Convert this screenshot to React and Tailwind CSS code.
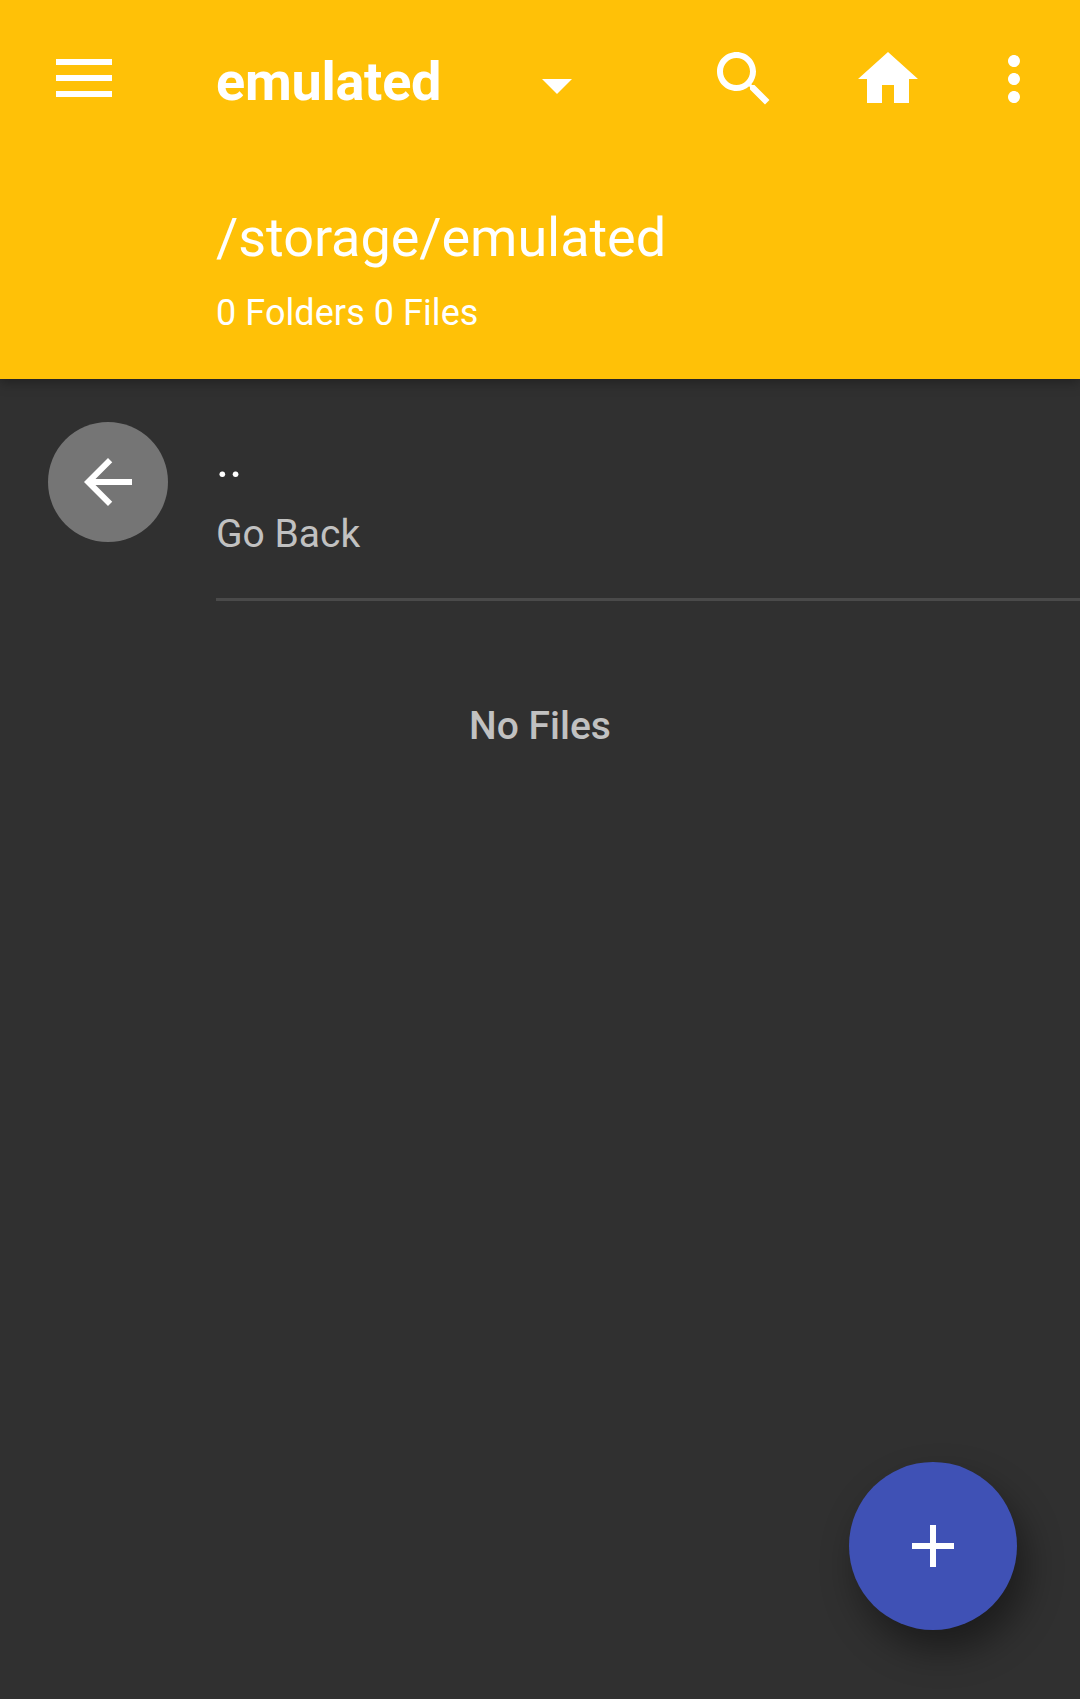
const Icon = ({ d, className }) => (
  <svg viewBox="0 0 24 24" fill="currentColor" className={className}>
    <path d={d} />
  </svg>
);

export default function App() {
  return (
    <div className="relative flex h-[1699px] w-[1080px] flex-col overflow-hidden bg-[#303030] font-['Roboto',sans-serif] text-white">
      <header className="z-10 h-[379px] shrink-0 bg-[#ffc107] shadow-[0_3px_12px_rgba(0,0,0,0.35)]">
        <div className="flex h-[158px] items-center">
          <svg viewBox="0 0 56 38" fill="currentColor" className="mb-[2px] ml-[56px] h-[38px] w-[56px] shrink-0">
            <path d="M0 0h56v6H0zM0 16h56v6H0zM0 32h56v6H0z" />
          </svg>
          <h1 className="ml-[104px] mt-[6px] w-[305px] text-[54px] font-bold leading-none tracking-[-0.25px]">emulated</h1>
          <Icon className="mt-[12px] size-[72px] shrink-0" d="M7 10l5 5 5-5z" />
          <Icon className="ml-[115px] size-[72px] shrink-0" d="M15.5 14h-.79l-.28-.27C15.41 12.59 16 11.11 16 9.5 16 5.91 13.09 3 9.5 3S3 5.91 3 9.5 5.91 16 9.5 16c1.61 0 3.09-.59 4.23-1.57l.27.28v.79l5 4.99L20.49 19l-4.99-5zm-6 0C7.01 14 5 11.99 5 9.5S7.01 5 9.5 5 14 7.01 14 9.5 11.99 14 9.5 14z" />
          <Icon className="ml-[72px] size-[72px] shrink-0" d="M10 20v-6h4v6h5v-8h3L12 3 2 12h3v8z" />
          <Icon className="ml-[54px] size-[72px] shrink-0" d="M12 8c1.1 0 2-.9 2-2s-.9-2-2-2-2 .9-2 2 .9 2 2 2zm0 2c-1.1 0-2 .9-2 2s.9 2 2 2 2-.9 2-2-.9-2-2-2zm0 6c-1.1 0-2 .9-2 2s.9 2 2 2 2-.9 2-2-.9-2-2-2z" />
        </div>
        <div className="pl-[216px] pt-[48px]">
          <p className="text-[54px] leading-[63px] tracking-[-0.05px]">/storage/emulated</p>
          <p className="mt-[23px] text-[36px] leading-[42px] tracking-[0.07px]">0 Folders 0 Files</p>
        </div>
      </header>
      <main>
        <div className="flex h-[222px]">
          <div className="ml-[48px] mt-[43px] flex size-[120px] items-center justify-center rounded-full bg-[#757575]">
            <Icon className="size-[72px]" d="M20 11H7.83l5.59-5.59L12 4l-8 8 8 8 1.41-1.41L7.83 13H20v-2z" />
          </div>
          <div className="ml-[48px] flex-1 border-b-[3px] border-[#4a4a4a] pt-[53px]">
            <p className="text-[50px] leading-[56px]">..</p>
            <p className="mt-[23px] text-[39px] leading-[46px] text-[#c1c1c1]">Go Back</p>
          </div>
        </div>
        <p className="mt-[102px] text-center text-[39px] font-medium leading-[46px] text-[#c1c1c1]">No Files</p>
      </main>
      <button className="absolute left-[849px] top-[1462px] flex size-[168px] items-center justify-center rounded-full bg-[#3f51b5] shadow-[9px_20px_36px_rgba(0,0,0,0.42)]">
        <Icon className="size-[72px]" d="M19 13h-6v6h-2v-6H5v-2h6V5h2v6h6v2z" />
      </button>
    </div>
  );
}
